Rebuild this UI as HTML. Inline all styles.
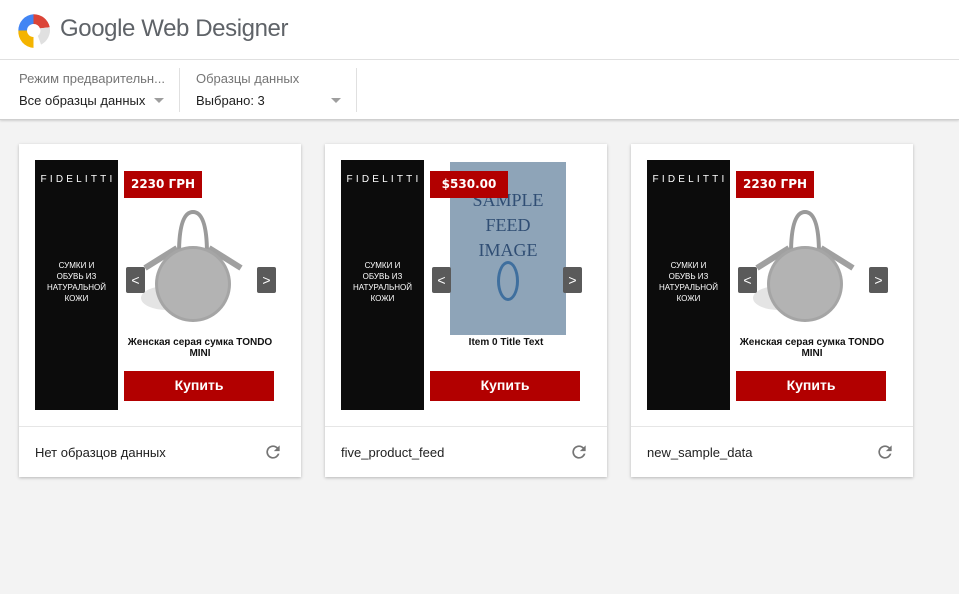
<!DOCTYPE html>
<html><head><meta charset="utf-8"><style>
*{margin:0;padding:0;box-sizing:border-box}
body{width:959px;height:594px;background:#f3f3f3;font-family:"Liberation Sans",Arial,sans-serif;position:relative;overflow:hidden}
.top{position:absolute;left:0;top:0;width:959px;height:120px;background:#fff;border-bottom:1px solid #cfcfcf;box-shadow:0 1px 2px rgba(0,0,0,.15)}
.hdrline{position:absolute;left:0;top:59px;width:959px;height:1px;background:#e0e0e0}
.title{position:absolute;left:60px;top:15px;font-size:24px;color:#5f6368;letter-spacing:-0.4px}
.lbl{position:absolute;font-size:13px;color:#757575}
.val{position:absolute;font-size:13px;color:#212121}
.vsep{position:absolute;top:68px;width:1px;height:44px;background:#e0e0e0}
.tri{position:absolute;width:0;height:0;border-left:5px solid transparent;border-right:5px solid transparent;border-top:5px solid #9e9e9e}
.card{position:absolute;top:144px;width:282px;height:333px;background:#fff;box-shadow:0 1px 3px rgba(0,0,0,.25)}
.blk{position:absolute;left:16px;top:16px;width:83px;height:250px;background:#0c0c0c;color:#fff}
.brand{position:absolute;left:0;top:14px;width:83px;text-align:center;font-size:10px;letter-spacing:3.2px;padding-left:3px}
.slog{position:absolute;left:0;top:100px;width:83px;text-align:center;font-size:8px;line-height:11px}
.price{position:absolute;left:105px;top:27px;width:78px;height:27px;background:#b20000;color:#fff;font-family:"DejaVu Sans",sans-serif;font-weight:bold;font-size:12px;line-height:27px;text-align:center}
.arr{position:absolute;top:123px;width:19px;height:26px;background:#5a5a5a;color:#fff;font-size:14px;line-height:26px;text-align:center;border-radius:2px}
.ttl{position:absolute;left:103px;top:193px;width:156px;text-align:center;font-size:10px;font-weight:bold;line-height:11px;color:#111;font-family:"Liberation Sans",sans-serif}
.btn{position:absolute;left:105px;top:227px;width:150px;height:30px;background:#b20000;color:#fff;font-weight:bold;font-size:14px;line-height:28px;text-align:center;font-family:"Liberation Sans",sans-serif}
.div{position:absolute;left:0;top:282px;width:282px;height:1px;background:#e6e6e6}
.foot{position:absolute;left:16px;top:301px;font-size:13px;color:#212121}
.ref{position:absolute;left:244px;top:298px}
</style></head><body>
<div class="top">
<svg style="position:absolute;left:15px;top:11px" width="37" height="39" viewBox="0 0 32 36">
<path d="M2 18 A15 15 0 0 1 16 3 L16 12 A6 6 0 0 0 10 18 Z" fill="#4285f4"/>
<path d="M16 3 A15 15 0 0 1 31 15 L22 16 A6 6 0 0 0 16 12 Z" fill="#db4437"/>
<path d="M31 15 A15 15 0 0 1 23 31 L20 23 A6 6 0 0 0 22 16 Z" fill="#e0e0e0"/>
<path d="M2 18 L10 18 A6 6 0 0 0 16 24 L16 34 A15 15 0 0 1 2 18 Z" fill="#f4b400"/>
</svg>
<div class="title">Google Web Designer</div>
<div class="hdrline"></div>
<div class="lbl" style="left:19px;top:71px">Режим предварительн...</div>
<div class="val" style="left:19px;top:93px">Все образцы данных</div>
<div class="tri" style="left:154px;top:98px"></div>
<div class="vsep" style="left:179px"></div>
<div class="lbl" style="left:196px;top:71px">Образцы данных</div>
<div class="val" style="left:196px;top:93px">Выбрано: 3</div>
<div class="tri" style="left:331px;top:98px"></div>
<div class="vsep" style="left:356px"></div>
</div>

<div class="card" style="left:19px">
<div class="blk"><div class="brand">FIDELITTI</div><div class="slog">СУМКИ И<br>ОБУВЬ ИЗ<br>НАТУРАЛЬНОЙ<br>КОЖИ</div></div>
<svg style="position:absolute;left:110px;top:60px" width="140" height="125" viewBox="0 0 140 125">
<ellipse cx="38" cy="94" rx="26" ry="12" fill="#e4e4e4"/>
<path d="M50 50 Q50 8 64 8 Q78 8 78 50" fill="none" stroke="#9a9a9a" stroke-width="4"/>
<path d="M48 44 L16 64" stroke="#a0a0a0" stroke-width="6"/>
<path d="M80 44 L112 64" stroke="#a0a0a0" stroke-width="6"/>
<circle cx="64" cy="80" r="38" fill="#a5a5a5"/>
<circle cx="64" cy="80" r="35" fill="#b3b3b3"/>
</svg>
<div class="price">2230 ГРН</div>
<div class="arr" style="left:107px">&lt;</div><div class="arr" style="left:238px">&gt;</div>
<div class="ttl">Женская серая сумка TONDO MINI</div>
<div class="btn">Купить</div>
<div class="div"></div>
<div class="foot">Нет образцов данных</div>
<svg class="ref" width="20" height="20" viewBox="0 0 24 24"><path d="M17.65 6.35A7.96 7.96 0 0 0 12 4a8 8 0 1 0 7.730 10h-2.08A6 6 0 1 1 12 6c1.66 0 3.14.69 4.22 1.78L13 11h7V4z" fill="#757575"/></svg>
</div>

<div class="card" style="left:325px">
<div class="blk"><div class="brand">FIDELITTI</div><div class="slog">СУМКИ И<br>ОБУВЬ ИЗ<br>НАТУРАЛЬНОЙ<br>КОЖИ</div></div>
<div style="position:absolute;left:125px;top:18px;width:116px;height:173px;background:#8ea4b8"></div>
<div style="position:absolute;left:125px;top:44px;width:116px;text-align:center;font-family:'Liberation Serif',serif;font-size:18px;line-height:25px;color:#304e74">SAMPLE<br>FEED<br>IMAGE</div>
<div style="position:absolute;left:172px;top:117px;width:22px;height:40px;border:3px solid #3f6f9e;border-radius:50%"></div>
<div class="price">$530.00</div>
<div class="arr" style="left:107px">&lt;</div><div class="arr" style="left:238px">&gt;</div>
<div class="ttl">Item 0 Title Text</div>
<div class="btn">Купить</div>
<div class="div"></div>
<div class="foot">five_product_feed</div>
<svg class="ref" width="20" height="20" viewBox="0 0 24 24"><path d="M17.65 6.35A7.96 7.96 0 0 0 12 4a8 8 0 1 0 7.73 10h-2.08A6 6 0 1 1 12 6c1.66 0 3.14.69 4.22 1.78L13 11h7V4z" fill="#757575"/></svg>
</div>

<div class="card" style="left:631px">
<div class="blk"><div class="brand">FIDELITTI</div><div class="slog">СУМКИ И<br>ОБУВЬ ИЗ<br>НАТУРАЛЬНОЙ<br>КОЖИ</div></div>
<svg style="position:absolute;left:110px;top:60px" width="140" height="125" viewBox="0 0 140 125">
<ellipse cx="38" cy="94" rx="26" ry="12" fill="#e4e4e4"/>
<path d="M50 50 Q50 8 64 8 Q78 8 78 50" fill="none" stroke="#9a9a9a" stroke-width="4"/>
<path d="M48 44 L16 64" stroke="#a0a0a0" stroke-width="6"/>
<path d="M80 44 L112 64" stroke="#a0a0a0" stroke-width="6"/>
<circle cx="64" cy="80" r="38" fill="#a5a5a5"/>
<circle cx="64" cy="80" r="35" fill="#b3b3b3"/>
</svg>
<div class="price">2230 ГРН</div>
<div class="arr" style="left:107px">&lt;</div><div class="arr" style="left:238px">&gt;</div>
<div class="ttl">Женская серая сумка TONDO MINI</div>
<div class="btn">Купить</div>
<div class="div"></div>
<div class="foot">new_sample_data</div>
<svg class="ref" width="20" height="20" viewBox="0 0 24 24"><path d="M17.65 6.35A7.96 7.96 0 0 0 12 4a8 8 0 1 0 7.73 10h-2.08A6 6 0 1 1 12 6c1.66 0 3.14.69 4.22 1.78L13 11h7V4z" fill="#757575"/></svg>
</div>
</body></html>
